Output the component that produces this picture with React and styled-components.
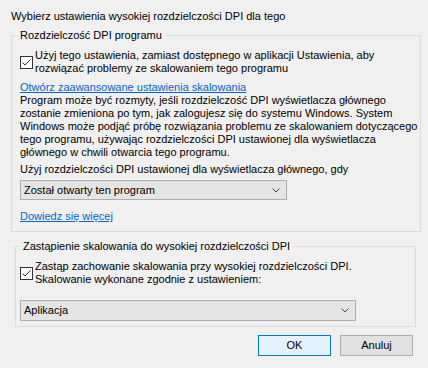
import React from 'react';
import styled, { createGlobalStyle } from 'styled-components';

const GlobalStyle = createGlobalStyle`
  html, body {
    margin: 0;
    padding: 0;
    background: #f0f0f0;
  }
  body {
    font-family: "Liberation Sans", Arial, sans-serif;
    font-size: 11px;
    line-height: 13px;
    color: #000;
  }
`;

const Dialog = styled.div`
  width: 428px;
  height: 368px;
  box-sizing: border-box;
  padding: 10px 7px 0 11px;
  display: flex;
  flex-direction: column;
`;

const Title = styled.div`
  white-space: nowrap;
`;

const Group = styled.fieldset`
  margin: ${(p) => p.$top}px ${(p) => p.$right}px 0 ${(p) => p.$left}px;
  padding: 0;
  border: 1px solid #dcdcdc;
  min-inline-size: 0;
`;

const Legend = styled.legend`
  margin-left: ${(p) => p.$offset}px;
  padding: 0 3px;
  white-space: nowrap;
`;

const GroupBody = styled.div`
  display: flex;
  flex-direction: column;
  align-items: flex-start;
  padding: 7px 0 ${(p) => p.$bottom}px ${(p) => p.$left}px;
`;

const CheckRow = styled.label`
  display: flex;
  align-items: center;
  gap: 2px;
  white-space: nowrap;
`;

const Box = styled.span`
  flex: none;
  width: 13px;
  height: 13px;
  box-sizing: border-box;
  border: 1px solid #333;
  background: #fff;
  display: flex;
  align-items: center;
  justify-content: center;
`;

const Link = styled.a`
  color: #0066cc;
  text-decoration: underline;
  margin-top: ${(p) => p.$top || 0}px;
  cursor: pointer;
  white-space: nowrap;
`;

const Text = styled.div`
  margin-top: ${(p) => p.$top || 0}px;
  white-space: nowrap;
`;

const Combo = styled.div`
  margin-top: ${(p) => p.$top}px;
  width: ${(p) => p.$width}px;
  height: ${(p) => p.$height}px;
  box-sizing: border-box;
  border: 1px solid #adadad;
  background: #e5e5e5;
  display: flex;
  align-items: center;
  justify-content: space-between;
  padding: 0 6px 0 3px;
`;

const Buttons = styled.div`
  display: flex;
  justify-content: flex-end;
  gap: 9px;
  margin-top: 8px;
  padding-right: 8px;
`;

const Button = styled.button`
  width: 73px;
  height: 21px;
  box-sizing: border-box;
  font: inherit;
  color: #000;
  border: 1px solid ${(p) => (p.$primary ? '#0078d7' : '#adadad')};
  background: ${(p) => (p.$primary ? '#e5f1fb' : '#e1e1e1')};
  padding: 0;
`;

const Check = () => (
  <Box>
    <svg width="11" height="11" viewBox="0 0 11 11">
      <path d="M1.5 5.5 L4 8 L9.5 2.5" fill="none" stroke="#333" strokeWidth="1" />
    </svg>
  </Box>
);

const Chevron = () => (
  <svg width="8" height="5" viewBox="0 0 8 5">
    <path d="M0.5 0.5 L4 4 L7.5 0.5" fill="none" stroke="#444" strokeWidth="1" />
  </svg>
);

export default function App() {
  return (
    <>
      <GlobalStyle />
      <Dialog>
        <Title>Wybierz ustawienia wysokiej rozdzielczości DPI dla tego</Title>

        <Group $top={6} $left={0} $right={0}>
          <Legend $offset={5}>Rozdzielczość DPI programu</Legend>
          <GroupBody $left={8} $bottom={8}>
            <CheckRow>
              <Check />
              <span>
                Użyj tego ustawienia, zamiast dostępnego w aplikacji Ustawienia, aby
                <br />
                rozwiązać problemy ze skalowaniem tego programu
              </span>
            </CheckRow>
            <Link $top={6}>Otwórz zaawansowane ustawienia skalowania</Link>
            <Text>
              Program może być rozmyty, jeśli rozdzielczość DPI wyświetlacza głównego
              <br />
              zostanie zmieniona po tym, jak zalogujesz się do systemu Windows. System
              <br />
              Windows może podjąć próbę rozwiązania problemu ze skalowaniem dotyczącego
              <br />
              tego programu, używając rozdzielczości DPI ustawionej dla wyświetlacza
              <br />
              głównego w chwili otwarcia tego programu.
            </Text>
            <Text $top={4}>Użyj rozdzielczości DPI ustawionej dla wyświetlacza głównego, gdy</Text>
            <Combo $top={4} $width={267} $height={20}>
              <span>Został otwarty ten program</span>
              <Chevron />
            </Combo>
            <Link $top={10}>Dowiedz się więcej</Link>
          </GroupBody>
        </Group>

        <Group $top={8} $left={4} $right={5}>
          <Legend $offset={4}>Zastąpienie skalowania do wysokiej rozdzielczości DPI</Legend>
          <GroupBody $left={4} $bottom={5}>
            <CheckRow>
              <Check />
              <span>
                Zastąp zachowanie skalowania przy wysokiej rozdzielczości DPI.
                <br />
                Skalowanie wykonane zgodnie z ustawieniem:
              </span>
            </CheckRow>
            <Combo $top={14} $width={336} $height={21}>
              <span>Aplikacja</span>
              <Chevron />
            </Combo>
          </GroupBody>
        </Group>

        <Buttons>
          <Button $primary>OK</Button>
          <Button>Anuluj</Button>
        </Buttons>
      </Dialog>
    </>
  );
}
